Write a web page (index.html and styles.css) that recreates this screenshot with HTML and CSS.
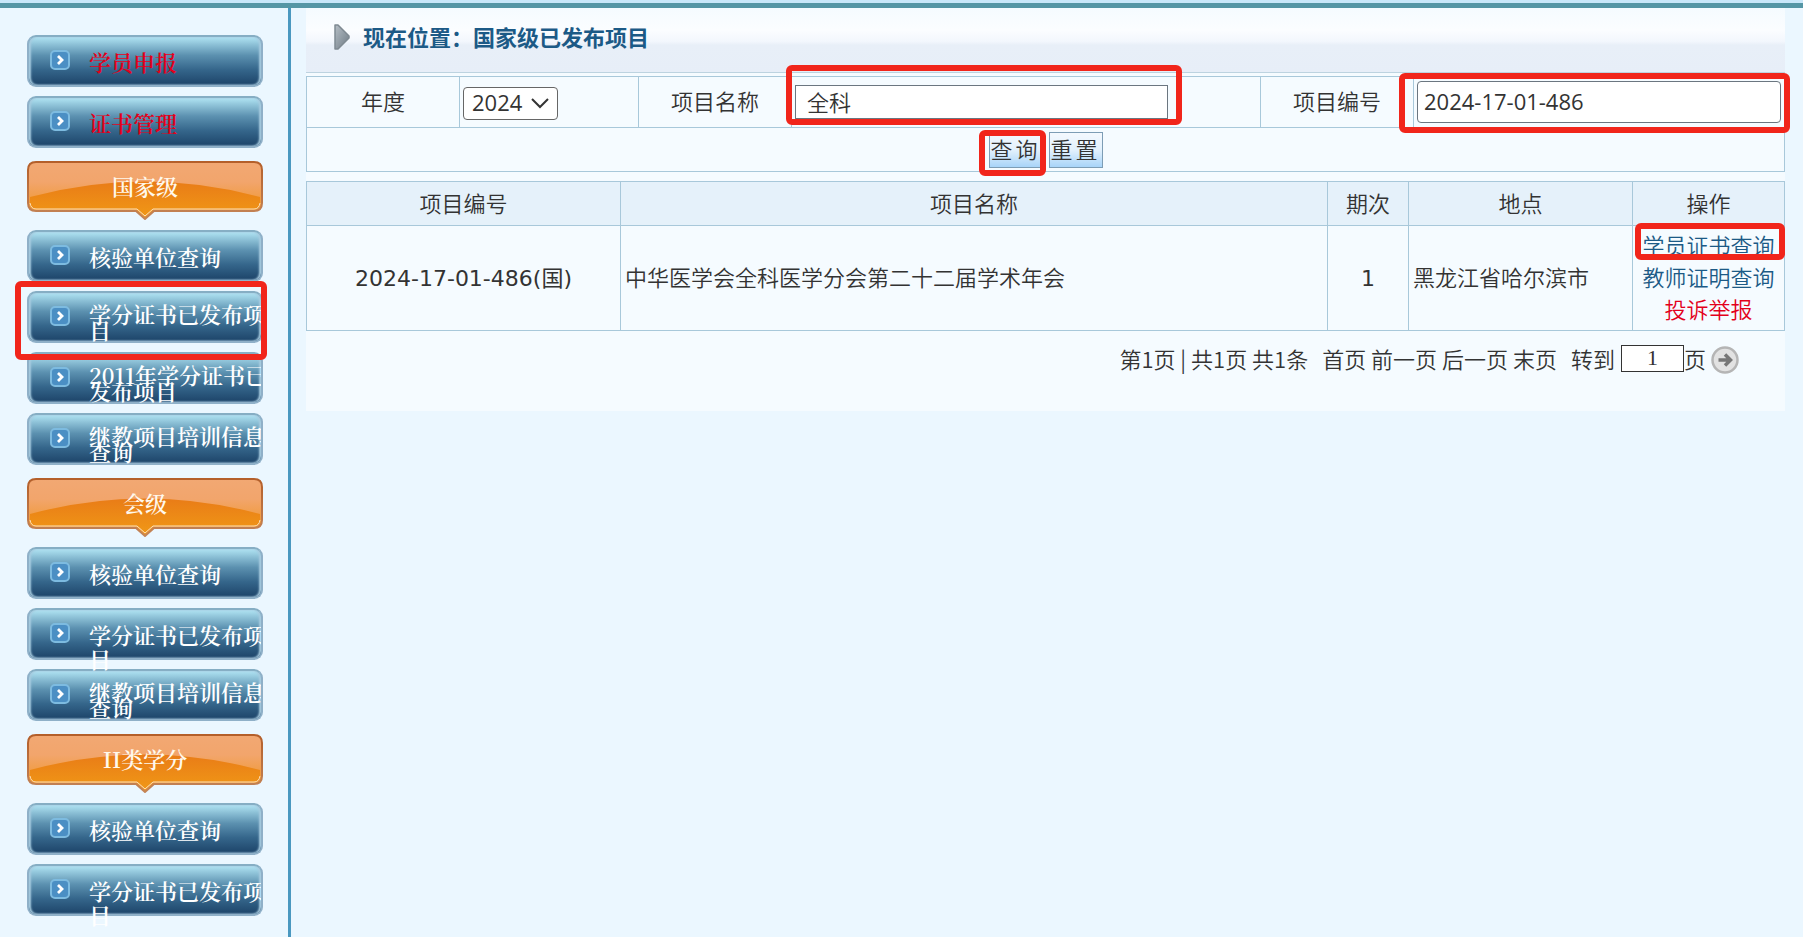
FILE: index.html
```
<!doctype html>
<html lang="zh-CN">
	<head>
		<meta charset="UTF-8">
		<title>国家级已发布项目</title>
		<link rel="stylesheet" href="styles.css">
	</head>
	<body>
		<svg class="defs" width="0" height="0">
			<defs>
				<linearGradient id="orange" x1="0" y1="0" x2="0" y2="1">
					<stop offset="0" stop-color="#f2a873"/>
					<stop offset="0.35" stop-color="#f2a56c"/>
					<stop offset="1" stop-color="#ef9318"/>
				</linearGradient>
				<linearGradient id="shade" x1="0" y1="0" x2="0" y2="1">
					<stop offset="0" stop-color="#e97c17"/>
					<stop offset="1" stop-color="#f09716"/>
				</linearGradient>
				<linearGradient id="edge" x1="0" y1="0" x2="0" y2="1">
					<stop offset="0" stop-color="#b45f2a"/>
					<stop offset="1" stop-color="#c48558"/>
				</linearGradient>
				<linearGradient id="grey" x1="0" y1="0" x2="1" y2="1">
					<stop offset="0" stop-color="#b5bec5"/>
					<stop offset="1" stop-color="#6f7b85"/>
				</linearGradient>
			</defs>
			<symbol id="tab" viewBox="0 0 236 59">
				<path d="M9 1H227Q235 1 235 9V42Q235 50 227 50H127L118 58L109 50H9Q1 50 1 42V9Q1 1 9 1Z" fill="url(#orange)" stroke="url(#edge)" stroke-width="2"/>
				<path d="M3 36Q118 5 233 36V42Q233 48 227 48H126L118 55L110 48H9Q3 48 3 42Z" fill="url(#shade)"/>
				<path d="M3 42Q4 48 9 48H110L118 55L126 48H227Q232 48 233 42" fill="none" stroke="#fbe0bd" stroke-width="1"/>
			</symbol>
			<symbol id="arrow" viewBox="0 0 20 20">
				<rect x="1" y="1" width="18" height="18" rx="4" fill="#4b8fc4" stroke="#7dbbe0" stroke-width="2"/>
				<path d="M8 6L12 10L8 14" fill="none" stroke="#fff" stroke-width="2.8"/>
			</symbol>
		</svg>
		<div class="topbar"></div>
		<div class="wrap">
			<div class="side">
				<ul>
					<li><a href="#" class="btn red"><svg class="ico"><use href="#arrow"/></svg><span>学员申报</span></a></li>
					<li><a href="#" class="btn red"><svg class="ico"><use href="#arrow"/></svg><span>证书管理</span></a></li>
				</ul>
				<h2 class="tab"><svg><use href="#tab"/></svg><span>国家级</span></h2>
				<ul>
					<li><a href="#" class="btn"><svg class="ico"><use href="#arrow"/></svg><span>核验单位查询</span></a></li>
					<li class="mark mark-side"><a href="#" class="btn tight"><svg class="ico"><use href="#arrow"/></svg><span>学分证书已发布项目</span></a></li>
					<li><a href="#" class="btn tight"><svg class="ico"><use href="#arrow"/></svg><span>2011年学分证书已发布项目</span></a></li>
					<li><a href="#" class="btn tight"><svg class="ico"><use href="#arrow"/></svg><span>继教项目培训信息查询</span></a></li>
				</ul>
				<h2 class="tab"><svg><use href="#tab"/></svg><span>会级</span></h2>
				<ul>
					<li><a href="#" class="btn"><svg class="ico"><use href="#arrow"/></svg><span>核验单位查询</span></a></li>
					<li><a href="#" class="btn"><svg class="ico"><use href="#arrow"/></svg><span>学分证书已发布项目</span></a></li>
					<li><a href="#" class="btn tight"><svg class="ico"><use href="#arrow"/></svg><span>继教项目培训信息查询</span></a></li>
				</ul>
				<h2 class="tab"><svg><use href="#tab"/></svg><span>II类学分</span></h2>
				<ul>
					<li><a href="#" class="btn"><svg class="ico"><use href="#arrow"/></svg><span>核验单位查询</span></a></li>
					<li><a href="#" class="btn"><svg class="ico"><use href="#arrow"/></svg><span>学分证书已发布项目</span></a></li>
				</ul>
			</div>
			<div class="main">
				<div class="panel">
					<h1 class="title">
						<svg width="18" height="28" viewBox="0 0 18 28"><path d="M2 2H5L16 13V15L5 26H2Z" fill="url(#grey)" stroke="#7f8a92" stroke-width="1.5" stroke-linejoin="round"/></svg>
						现在位置：国家级已发布项目
					</h1>
					<form>
						<table class="search">
							<colgroup><col class="s1"><col class="s2"><col class="s1"><col><col class="s1"><col class="s6"></colgroup>
							<tr>
								<th><label for="year">年度</label></th>
								<td>
									<div class="select">
										<select id="year"><option>2024</option></select>
										<svg width="18" height="11" viewBox="0 0 18 11"><path d="M1 1L9 9L17 1" fill="none" stroke="#333" stroke-width="2"/></svg>
									</div>
								</td>
								<th><label for="name">项目名称</label></th>
								<td><div class="mark mark-name"><input type="text" id="name" class="name" value="全科"></div></td>
								<th><label for="code">项目编号</label></th>
								<td><div class="mark mark-code"><input type="text" id="code" class="code" value="2024-17-01-486"></div></td>
							</tr>
							<tr>
								<td colspan="6">
									<div class="buttons">
										<div class="mark mark-query"><button type="button">查询</button></div>
										<button type="reset">重置</button>
									</div>
								</td>
							</tr>
						</table>
					</form>
					<table class="list">
						<colgroup><col class="l1"><col><col class="l3"><col class="l4"><col class="l5"></colgroup>
						<tr><th>项目编号</th><th>项目名称</th><th>期次</th><th>地点</th><th>操作</th></tr>
						<tr>
							<td class="center wide">2024-17-01-486(国)</td>
							<td>中华医学会全科医学分会第二十二届学术年会</td>
							<td class="center wide">1</td>
							<td>黑龙江省哈尔滨市</td>
							<td class="center ops">
								<div class="mark mark-op"><a href="#">学员证书查询</a></div>
								<a href="#">教师证明查询</a>
								<a href="#" class="report">投诉举报</a>
							</td>
						</tr>
					</table>
					<div class="pager">
						<span>第1页 | 共1页 共1条</span>
						<span class="links"><a href="#">首页</a> <a href="#">前一页</a> <a href="#">后一页</a> <a href="#">末页</a></span>
						<label for="page">转到</label>
						<input type="text" id="page" value="1">
						<span>页</span>
						<button type="button" class="go" aria-label="转到">
							<svg width="28" height="28" viewBox="0 0 28 28">
								<circle cx="14" cy="14" r="12.5" fill="#e2e2e2" stroke="#b5b5b5" stroke-width="2.5"/>
								<path d="M7.5 14H19M14 8.5L19.5 14L14 19.5" fill="none" stroke="#777" stroke-width="3.5"/>
							</svg>
						</button>
					</div>
				</div>
			</div>
		</div>
	</body>
</html>
```

FILE: styles.css
```
*{
	box-sizing: border-box;
}
html{
	overflow: hidden;
}
body{
	margin: 0;
	min-height: 100vh;
	display: flex;
	flex-direction: column;
	background-color: #ebf7ff;
	color: #333;
	font-size: 22px;
	font-weight: 350;
	line-height: 32px;
	font-family: "Open Sans","Noto Sans CJK SC",sans-serif;
}
a{
	color: #1c5a86;
	text-decoration: none;
}
ul{
	margin: 0;
	padding: 0;
	list-style: none;
}
input,select,button{
	font: inherit;
	color: inherit;
}
.defs{
	position: absolute;
}
.topbar{
	height: 8px;
	border-top: 3px solid #c9e7f9;
	background-color: #5596a5;
}
.wrap{
	flex: 1;
	display: flex;
}

/* 左侧菜单 */
.side{
	flex: none;
	width: 291px;
	padding: 27px 25px 0 27px;
	border-right: 3px solid #4a98c0;
}
.btn,.tab{
	font-family: "Noto Serif CJK SC","Liberation Serif",serif;
	font-size: 22px;
	font-weight: 600;
}
.btn{
	display: flex;
	gap: 19px;
	height: 52px;
	margin-bottom: 9px;
	padding: 13px 0 0 21px;
	border: 2px solid #8fb0c8;
	border-top-color: #86aec4;
	border-radius: 9px;
	background: linear-gradient(#b0e4f3,#8cc0d6 16%,#5c91b0 38%,#35668b 68%,#1d4469);
	box-shadow: inset 2px 0 2px #a6cbdf, inset -2px 0 2px #a6cbdf;
	overflow-x: clip;
	color: #fff;
	line-height: 24px;
}
.btn span{
	flex: none;
	width: 184px;
}
.btn.tight{
	line-height: 16px;
}
.btn.red{
	color: #e3001b;
}
.ico{
	flex: none;
	width: 20px;
	height: 20px;
}
.tab{
	display: grid;
	height: 59px;
	margin: 13px 0 10px;
	color: #fff8ec;
	line-height: 50px;
	text-align: center;
}
.tab svg,.tab span{
	grid-area: 1/1;
	width: 100%;
	height: 59px;
}

/* 右侧内容 */
.main{
	flex: 1;
	padding: 0 18px 0 15px;
}
.panel{
	padding-bottom: 30px;
	background-color: #f5fbff;
}
.title{
	display: flex;
	align-items: center;
	gap: 12px;
	height: 65px;
	margin: 0 0 3px;
	padding: 0 0 6px 27px;
	border-bottom: 1px solid #bdd3e0;
	background: linear-gradient(#f5fbff,#fbfdff 35%,#f3f7fd 52%,#e8eff8 58%,#e7eef8);
	color: #1c5a86;
	font-size: 22px;
	font-weight: 700;
}
table{
	width: 100%;
	border-collapse: collapse;
	table-layout: fixed;
}
th,td{
	padding: 0 4px 2px;
	border: 1px solid #a8c8da;
	font-weight: inherit;
	text-align: left;
}
th,.center{
	text-align: center;
}
.search td{
	padding: 0 3px;
}
.search tr:first-child{
	height: 51px;
}
.search tr + tr{
	height: 44px;
}
.s1{ width: 153px; }
.s2{ width: 179px; }
.s6{ width: 371px; }
.select{
	display: inline-grid;
	align-items: center;
	vertical-align: middle;
}
.select select,.select svg{
	grid-area: 1/1;
}
.select svg{
	justify-self: end;
	margin-right: 9px;
	pointer-events: none;
}
select{
	appearance: none;
	width: 95px;
	height: 33px;
	padding: 0 8px 2px;
	border: 1px solid #666;
	border-radius: 4px;
	background-color: #fff;
	font-weight: 400;
	line-height: 28px;
}
.search input{
	display: block;
	border: 1px solid #6b7680;
	background-color: #fff;
}
.name{
	width: 373px;
	height: 34px;
	padding: 0 11px 2px;
}
.search .code{
	width: 100%;
	height: 42px;
	padding: 0 6px 2px;
	border-radius: 4px;
	font-weight: 400;
}
.buttons{
	display: flex;
	justify-content: center;
	gap: 6px;
}
.buttons button{
	display: block;
	width: 54px;
	height: 36px;
	padding: 0 0 2px;
	border: 1px solid #7d9db5;
	background: linear-gradient(#f4f9fe,#e3f1fd 50%,#a8d4f8);
	letter-spacing: 3px;
	line-height: 32px;
}

/* 红框 */
.mark{
	position: relative;
}
.mark::after{
	content: "";
	position: absolute;
	z-index: 1;
	border: 6px solid #f1251b;
	border-radius: 6px;
	pointer-events: none;
}
.mark-side::after{
	inset: -10px -4px -17px -12px;
}
.mark-name{
	width: 373px;
}
.mark-name::after{
	inset: -20px -14px -6px -9px;
}
.mark-code::after{
	inset: -8px -9px -10px -18px;
}
.mark-query::after{
	inset: -2px -3px -8px -10px;
}
.mark-op::after{
	inset: -6px -5px 1px -2px;
}

.list{
	margin-top: 9px;
}
.list th{
	height: 44px;
	background-color: #e5f1fa;
}
.list td{
	height: 105px;
}
.l1{ width: 314px; }
.l3{ width: 81px; }
.l4{ width: 224px; }
.l5{ width: 152px; }
.list .wide{
	padding: 2px 4px 0;
	font-family: "DejaVu Sans","Noto Sans CJK SC",sans-serif;
	font-weight: 400;
}
.ops a{
	display: block;
}
.ops .report{
	color: #e3001b;
}
.pager{
	display: flex;
	justify-content: flex-end;
	align-items: center;
	height: 46px;
	margin-top: 4px;
	padding-right: 46px;
	font-family: "Noto Sans CJK SC",sans-serif;
}
.pager a{
	color: #333;
}
.pager .links{
	margin: 0 14px;
}
.pager input{
	width: 63px;
	height: 27px;
	margin-left: 6px;
	border: 1px solid #333;
	background-color: #fff;
	font-family: "Liberation Serif",serif;
	text-align: center;
}
.go{
	margin-left: 5px;
	padding: 3px 0 0;
	border: none;
	background: none;
	line-height: 0;
}
```
